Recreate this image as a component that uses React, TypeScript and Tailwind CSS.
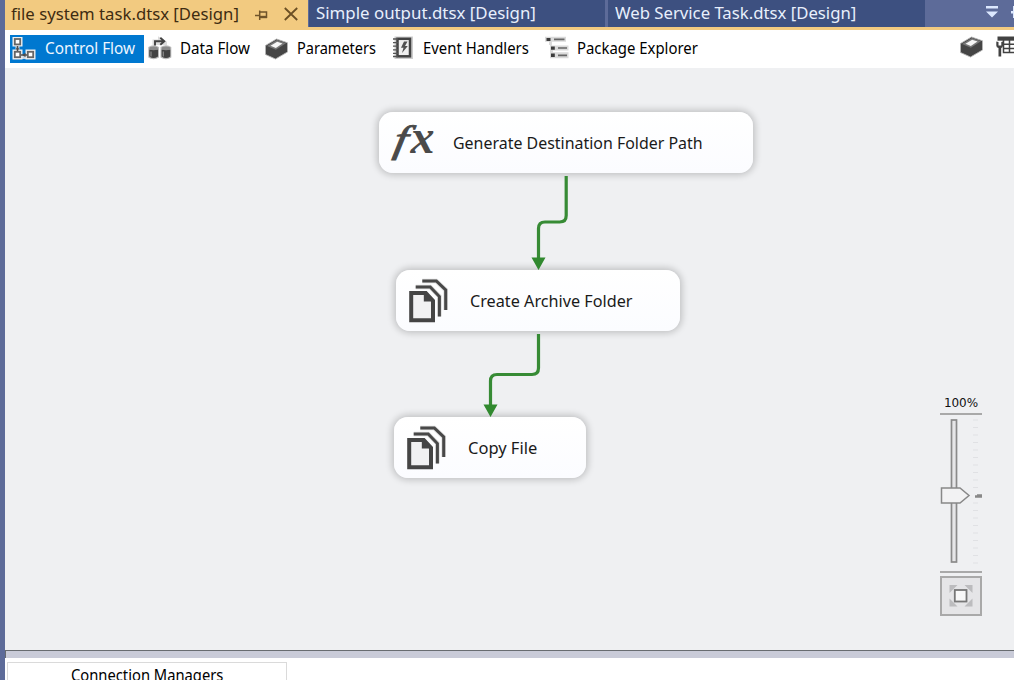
import React from "react";

const UI = "font-['Noto_Sans','Open_Sans',sans-serif]";

function Label({ text, width, className }: { text: string; width: number; className: string }) {
  const ref = React.useRef<HTMLSpanElement>(null);
  const [scale, setScale] = React.useState(1);
  React.useLayoutEffect(() => {
    if (ref.current) setScale(width / ref.current.offsetWidth);
  }, [width]);
  return (
    <span className="block shrink-0" style={{ width }}>
      <span
        ref={ref}
        className={`inline-block origin-left whitespace-nowrap ${UI} ${className}`}
        style={{ transform: `scaleX(${scale})` }}
      >
        {text}
      </span>
    </span>
  );
}

function ControlFlowIcon() {
  return (
    <svg className="h-6 w-6 shrink-0" viewBox="0 0 24 24" fill="none">
      <path d="M5.5 8v12H16" stroke="#c3d3e2" strokeWidth="4" />
      <rect x="0.5" y="0" width="10" height="9.5" fill="#f0f0f0" />
      <rect x="0.5" y="12.5" width="10" height="10" fill="#f0f0f0" />
      <rect x="13.5" y="12.5" width="10" height="10" fill="#f0f0f0" />
      <path d="M5.5 9v6M9 18h6" stroke="#4d4d4d" strokeWidth="1.5" />
      <path d="M3.5 12.5h4l-2 -2.5zM10.5 18l3 -2.3v4.6z" fill="#4d4d4d" />
      <g stroke="#666" strokeWidth="1.8" fill="#fff">
        <rect x="2.8" y="2" width="5.4" height="5.4" />
        <rect x="2.8" y="14.8" width="5.4" height="5.4" />
        <rect x="15.8" y="14.8" width="5.4" height="5.4" />
      </g>
    </svg>
  );
}

function DataFlowIcon() {
  return (
    <svg className="h-6 w-6 shrink-0" viewBox="0 0 24 24">
      <path d="M4.500 9V3.500H10V0.300L19 5.800V9z" fill="#dcdcdc" />
      <path d="M0.300 11Q5.500 7.500 11 11V21.500Q5.500 25 0.300 21.500zM12.500 11Q18 7.500 23.300 11V21.500Q18 25 12.500 21.500z" fill="#b9b9b9" />
      <path d="M1.300 13.500V20.500Q5.500 23.500 10 20.500V13.500zM13.600 13.500V20.500Q18 23.500 22.300 20.500V13.500z" fill="#424242" />
      <ellipse cx="5.600" cy="12.300" rx="4.400" ry="1.900" fill="#8a8a8a" />
      <ellipse cx="18" cy="12.300" rx="4.400" ry="1.900" fill="#8a8a8a" />
      <path d="M3 15.500v5M15.300 15.500v5" stroke="#8a8a8a" strokeWidth="1.200" />
      <path d="M7 9.500V5.300h9M12.300 1.800l4 3.500 -4 3.500" fill="none" stroke="#424242" strokeWidth="1.900" />
    </svg>
  );
}

function BoxIcon() {
  return (
    <svg className="h-6 w-6 shrink-0" viewBox="0 0 24 24">
      <path d="M0.5 8.500L11.5 2l11 3.800V15L10.5 22 0.5 17.500z" fill="#454545" stroke="#b5b5b5" strokeWidth=".9" />
      <path d="M2 8.900L12 3l9 3.200L10.800 12.800z" fill="#777" />
      <path d="M5.500 8.700L12.200 4.700l5.300 1.900L10.800 11z" fill="#f6f6f6" />
    </svg>
  );
}

function EventIcon() {
  return (
    <svg className="h-6 w-6 shrink-0" viewBox="0 0 24 24">
      <rect x="2.500" y=".5" width="18.500" height="22.500" fill="#cdcdcd" />
      <rect x="5.500" y="2.800" width="12.500" height="17.500" fill="#eee" stroke="#424242" strokeWidth="2.500" />
      <path d="M1 3h5M1 6.600h5M1 10.200h5M1 13.800h5M1 17.400h5M1 20.500h5" stroke="#555" strokeWidth="1.300" />
      <path d="M12 5.500h3.500L13 10h2.800l-5.800 7 1.500-5.300H9z" fill="#505050" />
    </svg>
  );
}

function ExplorerIcon() {
  return (
    <svg className="h-6 w-6 shrink-0" viewBox="0 0 24 24">
      <path d="M0 .8h21v5H7v3.700h16.500v5H8v1.800h15.500v6H5V9H4V5.800H0z" fill="#dadada" />
      <path d="M1.500 1.900h4v3.200h-4zM6 10.400h3.800v3.400H6zM6 17.600h3.800v3.400H6z" fill="#3c3c3c" />
      <path d="M9 3.400h10.500M13 12h9M13 19.400h9" stroke="#666" strokeWidth="1.600" />
    </svg>
  );
}

function VariablesIcon() {
  return (
    <svg className="h-6 w-6 shrink-0" viewBox="0 0 24 24" fill="none">
      <path d="M1.500 1.500H24v4.200H1.500z" fill="#424242" />
      <path d="M7.500 5v12.500H24M7.500 9.200H24M7.500 13.400H24M13.500 5v12.500M20 5v12.500" stroke="#424242" strokeWidth="1.500" />
      <path d="M.3 6.500v4q0 2 2.200 2.600V21.500h2.700v-8.400Q7 12.500 7 10.500v-4L5.300 7v3.500H2.500V7z" fill="#424242" />
    </svg>
  );
}

function FilesIcon() {
  return (
    <svg className="h-[46px] w-[42px] shrink-0" viewBox="0 0 42 46" fill="none">
      <g stroke="#dcdcdc" strokeWidth="4.600">
        <path d="M7.700 9h14.500l9.200 9.500V38.500M14.300 3h14l9.400 9V32" />
      </g>
      <g stroke="#484848" strokeWidth="3">
        <path d="M7.700 9h14.500l9.200 9.500V38.500M14.300 3h14l9.400 9V32" />
      </g>
      <path d="M3.200 15.100h14.600l7.200 7.600v19.600H3.200z" fill="#f1f1f2" stroke="#454545" strokeWidth="4" />
      <path d="M15.800 14v9.500h10z" fill="#454545" />
    </svg>
  );
}

function FxIcon() {
  return (
    <svg className="h-[56px] w-[50px] shrink-0 overflow-visible" viewBox="0 -5 50 56">
      <g fill="#4a4a4a" fontFamily="Liberation Serif, serif" fontStyle="italic">
        <text transform="translate(7.500 32) skewX(-10) scale(1.280 1)" fontSize="38" stroke="#4a4a4a" strokeWidth="0.900">f</text>
        <text transform="translate(25.500 33)" fontSize="48" fontWeight="700">x</text>
      </g>
    </svg>
  );
}

function Task({ place, icon, text, width }: { place: string; icon: React.ReactNode; text: string; width: number }) {
  return (
    <div
      className={`absolute flex h-[61px] items-center rounded-[14px] bg-gradient-to-b from-white to-[#fbfcff] shadow-[0_0_7px_2px_rgba(0,0,0,0.2)] ${place}`}
    >
      {icon}
      <Label text={text} width={width} className="text-[16px] leading-[22px] text-[#1a1a1a]" />
    </div>
  );
}

function Connectors() {
  return (
    <svg className="absolute inset-0 h-full w-full" fill="none" stroke="#378b35" strokeWidth="3.200">
      <path d="M561.200 108V147.500q0 6.500 -6.500 6.500H540q-6.500 0 -6.500 6.500V192" />
      <path d="M533.500 266V300q0 6.500 -6.500 6.500H492q-6.500 0 -6.500 6.500V338" />
      <path d="M526.500 189.500h14l-7 12.500zM478.500 336.500h14l-7 12.500z" fill="#31892f" stroke="none" />
    </svg>
  );
}

function ZoomControl() {
  return (
    <div className="absolute left-[935px] top-[327px] flex w-[42px] flex-col items-center">
      <span className="pt-px font-['DejaVu_Sans',sans-serif] text-[12px] leading-[14px] tracking-[-0.1px] text-[#111]">100%</span>
      <svg className="h-[206px] w-[42px]" viewBox="0 0 42 206" fill="none">
        <path d="M0 4h42M0 162h42" stroke="#a9a9a9" strokeWidth="2" />
        <rect x="11.500" y="10" width="5" height="142" fill="#e6e6e8" stroke="#8a8a8a" strokeWidth="1.700" />
        <path
          d="M33 10h5M33 17.500h5M33 25h5M33 32.500h5M33 40h5M33 47.500h5M33 55h5M33 62.500h5M33 70h5M33 77.500h5M33 93h5M33 100.500h5M33 108h5M33 115.500h5M33 123h5M33 130.500h5M33 138h5M33 145.500h5M33 153h5"
          stroke="#e0e1e4"
        />
        <path d="M1.500 78H20l9 7.500 -9 7.500H1.500z" fill="#f2f2f3" stroke="#888" strokeWidth="1.500" />
        <path d="M35 86.500h7M37 85.500h5" stroke="#888" strokeWidth="2.400" />
        <rect x="1" y="167" width="40" height="38" fill="#e5e5e7" stroke="#a9a9a9" strokeWidth="2" />
        <path d="M9.500 175h8l-8 8zM32.500 175h-8l8 8zM9.500 196.500h8l-8-8zM32.500 196.500h-8l8-8z" fill="#bcbcbe" />
        <rect x="14.800" y="180" width="11.700" height="11.500" fill="#f8f8f8" stroke="#777" strokeWidth="1.800" />
      </svg>
    </div>
  );
}

export default function App() {
  const tab = "text-[17px] leading-[24px]";
  const tool = "text-[16px] leading-[22px]";
  return (
    <div className="flex h-[680px] w-[1014px] overflow-hidden bg-white">
      <div className="w-[5px] shrink-0 bg-[#5d6b99]" />
      <div className="flex min-w-0 flex-1 flex-col">
        <div className="flex h-[30px] shrink-0 border-b-[3px] border-[#f2ca80] bg-[#5d6b99]">
          <div className="-mb-[3px] flex w-[303px] shrink-0 items-start bg-[#f2ca80] pl-[6px] pt-[2px]">
            <Label text="file system task.dtsx [Design]" width={228} className={`${tab} text-[#3e2c12]`} />
            <svg className="ml-[16px] mt-[7px] h-3 w-3.5 shrink-0" viewBox="0 0 14 12" fill="none" stroke="#70542a" strokeWidth="1.500">
              <path d="M0 6.500h4.500M4.700 1.500v9.500" />
              <path d="M4.700 3H11.500v6M4.700 8.300H12" />
              <path d="M4.700 8h7.300" strokeWidth="2.400" />
            </svg>
            <svg className="ml-[15px] mt-[5px] h-3.5 w-3.5 shrink-0" viewBox="0 0 14 14" stroke="#6b4f24" strokeWidth="1.800">
              <path d="M.8 1l12.400 12M13.200 1L.8 13" />
            </svg>
          </div>
          <div className="ml-px flex w-[296px] shrink-0 items-start bg-[#3d5080] pl-[7px] pt-px">
            <Label text="Simple output.dtsx [Design]" width={220} className={`${tab} text-[#e8effc]`} />
          </div>
          <div className="ml-[3px] flex w-[317px] shrink-0 items-start bg-[#3d5080] pl-[7px] pt-px">
            <Label text="Web Service Task.dtsx [Design]" width={241} className={`${tab} text-[#e8effc]`} />
          </div>
          <svg className="ml-[61px] mt-[5px] h-[14px] w-[28px] shrink-0" viewBox="0 0 28 14" fill="#dce8ff">
            <path d="M0 1h12v2.500H0zM0 6.500h12l-6 6zM25 6h3v2.500h-3zM27 1h1v12h-1z" />
          </svg>
        </div>

        <div className="flex h-[38px] shrink-0 items-start bg-white pt-[5px]">
          <div className="ml-[5px] flex h-[28px] w-[134px] shrink-0 items-start bg-[#0078d0]">
            <div className="ml-[2px] mt-[2px]"><ControlFlowIcon /></div>
            <div className="ml-[9px] mt-px"><Label text="Control Flow" width={90} className={`${tool} text-[#eef6ff]`} /></div>
          </div>
          <div className="ml-[4px] mt-px"><DataFlowIcon /></div>
          <div className="ml-[8px] mt-px"><Label text="Data Flow" width={70} className={`${tool} text-black`} /></div>
          <div className="ml-[15px] mt-[2px]"><BoxIcon /></div>
          <div className="ml-[8px] mt-px"><Label text="Parameters" width={79} className={`${tool} text-black`} /></div>
          <div className="ml-[16px] mt-px"><EventIcon /></div>
          <div className="ml-[7px] mt-px"><Label text="Event Handlers" width={106} className={`${tool} text-black`} /></div>
          <div className="ml-[16px] mt-px"><ExplorerIcon /></div>
          <div className="ml-[8px] mt-px"><Label text="Package Explorer" width={121} className={`${tool} text-black`} /></div>
          <div className="ml-[262px] mt-0"><BoxIcon /></div>
          <div className="ml-[12px] mt-0"><VariablesIcon /></div>
        </div>

        <div className="relative h-[582px] shrink-0 overflow-hidden bg-[#eff0f2]">
          <Task
            place="left-[374px] top-[44px] w-[374px] pl-[6px]"
            icon={<div className="mr-[18px]"><FxIcon /></div>}
            text="Generate Destination Folder Path"
            width={250}
          />
          <Task
            place="left-[391px] top-[202px] w-[284px] pl-[12px]"
            icon={<div className="mr-[20px]"><FilesIcon /></div>}
            text="Create Archive Folder"
            width={162}
          />
          <Task
            place="left-[389px] top-[349px] w-[192px] pl-[12px]"
            icon={<div className="mr-[20px]"><FilesIcon /></div>}
            text="Copy File"
            width={69}
          />
          <Connectors />
          <ZoomControl />
        </div>

        <div className="h-[8px] shrink-0 border-l border-t border-[#686c70] bg-[#c9cbd8]" />
        <div className="flex flex-1 items-start overflow-hidden bg-white pl-[2px] pt-[4px]">
          <div className="flex h-[40px] w-[280px] shrink-0 border border-[#dadada] pl-[63px]">
            <Label text="Connection Managers" width={152} className={`${tool} text-black`} />
          </div>
        </div>
      </div>
    </div>
  );
}
